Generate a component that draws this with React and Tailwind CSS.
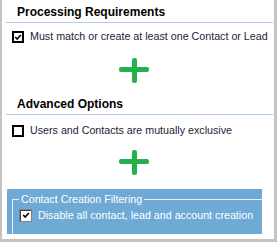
import React from 'react'

const font = { fontFamily: '"Liberation Sans", Arial, sans-serif' }

function Check({ className = '' }) {
  return (
    <svg viewBox="0 0 10 10" className={className}>
      <path d="M1.5 5 L4 7.5 L8.5 2.5" fill="none" stroke="#000" strokeWidth="2" />
    </svg>
  )
}

function BlackBox({ checked }) {
  return (
    <div className="w-[12px] h-[12px] border-2 border-black bg-white flex items-center justify-center shrink-0">
      {checked && <Check className="w-[8px] h-[8px]" />}
    </div>
  )
}

function Plus() {
  return (
    <div className="relative w-[30px] h-[25px] ml-[117px]">
      <div className="absolute left-0 right-0 top-[9px] h-[5px] bg-[#22b14c] rounded-[2px]" />
      <div className="absolute top-0 bottom-0 left-[13px] w-[5px] bg-[#22b14c] rounded-[2px]" />
    </div>
  )
}

function Heading({ children }) {
  return (
    <>
      <div className="h-[22px] pl-[15px] pt-[5px] text-[12px] leading-[14px] font-bold text-black">{children}</div>
      <div className="h-px ml-[4px] mr-[1px] bg-[#aecbec]" />
    </>
  )
}

export default function App() {
  return (
    <div className="w-[277px] h-[242px] bg-white border-l-2 border-r-[3px] border-b-[3px] border-[#c3c3c3] overflow-hidden" style={font}>
      <Heading>Processing Requirements</Heading>
      <div className="mt-[7px] pl-[10px] flex items-center gap-[6px] h-[13px] text-[10.7px] text-[#1c1c38] whitespace-nowrap">
        <BlackBox checked />
        <span>Must match or create at least one Contact or Lead</span>
      </div>
      <div className="mt-[15px]"><Plus /></div>

      <div className="mt-[9px]">
        <Heading>Advanced Options</Heading>
      </div>
      <div className="mt-[9px] pl-[10px] flex items-center gap-[6px] h-[13px] text-[10.7px] text-[#1c1c38] whitespace-nowrap">
        <BlackBox />
        <span>Users and Contacts are mutually exclusive</span>
      </div>
      <div className="mt-[13px]"><Plus /></div>

      <div className="mt-[14px] ml-[5px] w-[255px] h-[45px] bg-[#6fa9d5] overflow-hidden pt-[3px] pl-[5px]">
        <fieldset className="border-t border-l border-[#e8f1f9] h-[60px] pl-[6px]">
          <legend className="px-[2px] text-[10.7px] leading-[14px] text-white">Contact Creation Filtering</legend>
          <div className="mt-[1px] flex items-center gap-[6px] text-[10.7px] text-white whitespace-nowrap">
            <div className="w-[13px] h-[13px] border border-[#808080] bg-white flex items-center justify-center shrink-0 shadow-[inset_1px_1px_0_#404040]">
              <Check className="w-[8px] h-[8px]" />
            </div>
            <span>Disable all contact, lead and account creation</span>
          </div>
        </fieldset>
      </div>
    </div>
  )
}
